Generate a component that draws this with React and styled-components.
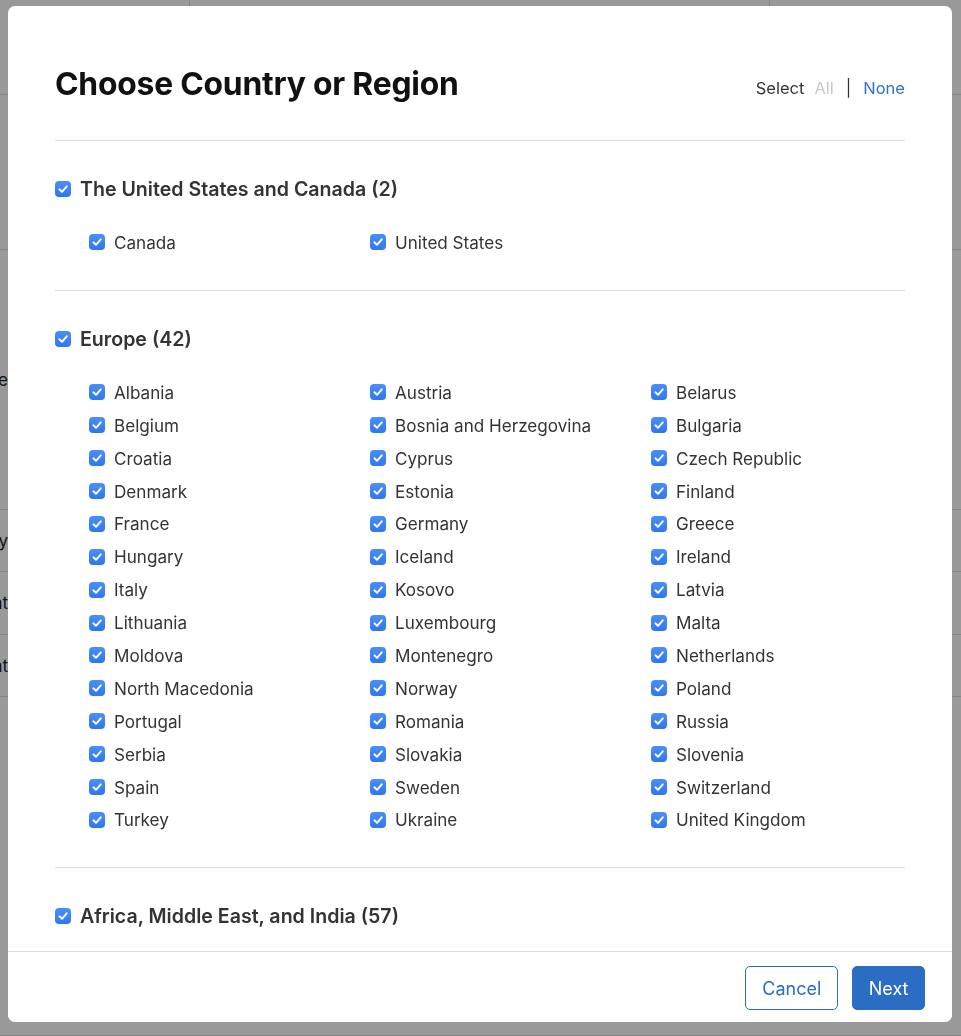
import React from "react";
import styled, { createGlobalStyle } from "styled-components";

const Global = createGlobalStyle`
  html, body { margin: 0; padding: 0; height: 100%; }
  body {
    font-family: Inter, "Noto Sans", "Liberation Sans", sans-serif;
    background: #fff;
    overflow: hidden;
  }
  * { box-sizing: border-box; }
`;

/* ---------- background page (behind the dim overlay) ---------- */
const Page = styled.div`
  width: 961px;
  height: 1036px;
  display: flex;
  flex-direction: column;
  background: #fff;
`;
const PageRow = styled.div`
  height: ${(p) => p.$h}px;
  flex: none;
  display: flex;
  align-items: center;
  border-bottom: 1px solid #dcdcdc;
  font-size: 17px;
  color: #222;
`;
const PageCell = styled.div`
  width: ${(p) => p.$w}px;
  flex: none;
  height: 100%;
  display: flex;
  align-items: center;
  justify-content: flex-end;
  border-right: ${(p) => (p.$line ? "1px solid #dcdcdc" : "none")};
  white-space: nowrap;
  overflow: visible;
`;
const Dim = styled.div`
  position: fixed;
  inset: 0;
  background: rgba(0, 0, 0, 0.4);
`;

/* ---------- modal ---------- */
const Modal = styled.div`
  position: fixed;
  left: 8px;
  top: 6px;
  width: 944px;
  height: 1016px;
  background: #fff;
  border-radius: 7px;
  display: flex;
  flex-direction: column;
  overflow: hidden;
`;
const Body = styled.div`
  flex: 1;
  overflow: hidden;
  padding: 0 47px;
`;
const Header = styled.div`
  height: 135px;
  display: flex;
  align-items: center;
  justify-content: space-between;
  padding-top: 21px;
  border-bottom: 1px solid #dddddd;
`;
const Title = styled.h1`
  margin: 0;
  font-size: 31.8px;
  font-weight: 700;
  color: #111;
  letter-spacing: -0.2px;
`;
const SelectBar = styled.div`
  display: flex;
  align-items: center;
  gap: 10px;
  font-size: 16.5px;
  color: #333;
  padding-top: 9px;
`;
const SelectLink = styled.span`
  color: ${(p) => (p.$disabled ? "#c8c8c8" : "#2f72cc")};
  cursor: ${(p) => (p.$disabled ? "default" : "pointer")};
`;
const Pipe = styled.span`
  color: #333;
  margin: 0 2px;
`;

const Section = styled.section`
  padding: 36px 0 ${(p) => (p.$last ? 0 : 31)}px;
  border-bottom: ${(p) => (p.$last ? "none" : "1px solid #dddddd")};
`;
const GroupHead = styled.label`
  height: 24px;
  display: flex;
  align-items: center;
  gap: 9px;
  font-size: 19.6px;
  font-weight: 600;
  color: #333;
`;
const Grid = styled.div`
  margin-top: 25px;
  padding-left: 34px;
  display: grid;
  grid-template-columns: repeat(3, 281px);
  grid-auto-rows: 32.9px;
`;
const Item = styled.label`
  display: flex;
  align-items: center;
  gap: 9px;
  font-size: 17.1px;
  color: #333;
  white-space: nowrap;
`;
const Box = styled.span`
  width: 16px;
  height: 16px;
  flex: none;
  border-radius: 4px;
  background: linear-gradient(#4a8ff8, #2f77f0);
  display: inline-flex;
  align-items: center;
  justify-content: center;
`;

const Footer = styled.div`
  flex: none;
  height: 71px;
  border-top: 1px solid #dddddd;
  display: flex;
  align-items: center;
  justify-content: flex-end;
  gap: 14px;
  padding: 2px 27px 0 0;
`;
const Button = styled.button`
  height: 44px;
  padding: 0 ${(p) => (p.$primary ? 15.5 : 16)}px;
  border-radius: 5px;
  font-family: inherit;
  font-size: 18px;
  border: 1px solid #2c6dc4;
  background: ${(p) => (p.$primary ? "#2c6dc4" : "#fff")};
  color: ${(p) => (p.$primary ? "#fff" : "#2c6dc4")};
  cursor: pointer;
`;

const Check = () => (
  <Box>
    <svg width="12" height="12" viewBox="0 0 12 12">
      <path
        d="M2.4 6.3 L5 8.8 L9.8 3.3"
        fill="none"
        stroke="#fff"
        strokeWidth="1.9"
        strokeLinecap="round"
        strokeLinejoin="round"
      />
    </svg>
  </Box>
);

const groups = [
  { name: "The United States and Canada", items: ["Canada", "United States"] },
  {
    name: "Europe",
    items: [
      "Albania", "Austria", "Belarus",
      "Belgium", "Bosnia and Herzegovina", "Bulgaria",
      "Croatia", "Cyprus", "Czech Republic",
      "Denmark", "Estonia", "Finland",
      "France", "Germany", "Greece",
      "Hungary", "Iceland", "Ireland",
      "Italy", "Kosovo", "Latvia",
      "Lithuania", "Luxembourg", "Malta",
      "Moldova", "Montenegro", "Netherlands",
      "North Macedonia", "Norway", "Poland",
      "Portugal", "Romania", "Russia",
      "Serbia", "Slovakia", "Slovenia",
      "Spain", "Sweden", "Switzerland",
      "Turkey", "Ukraine", "United Kingdom",
    ],
  },
  { name: "Africa, Middle East, and India", count: 57, items: [] },
];

const bgRows = [
  { h: 95, t: "" },
  { h: 155, t: "" },
  { h: 260, t: "Type" },
  { h: 62, t: "Priority" },
  { h: 63, t: "Amount" },
  { h: 62, t: "Amount" },
  { h: 339, t: "" },
];

export default function App() {
  return (
    <>
      <Global />
      <Page>
        {bgRows.map((r, i) => (
          <PageRow key={i} $h={r.h}>
            <PageCell $w={8}>{r.t}</PageCell>
            <PageCell $w={182} $line={i === 0} />
            <PageCell $w={580} $line={i === 0} />
          </PageRow>
        ))}
      </Page>
      <Dim />
      <Modal>
        <Body>
          <Header>
            <Title>Choose Country or Region</Title>
            <SelectBar>
              <span>Select</span>
              <SelectLink $disabled>All</SelectLink>
              <Pipe>|</Pipe>
              <SelectLink>None</SelectLink>
            </SelectBar>
          </Header>
          {groups.map((g, gi) => (
            <Section key={g.name} $last={gi === groups.length - 1}>
              <GroupHead>
                <Check />
                {g.name} ({g.count ?? g.items.length})
              </GroupHead>
              {g.items.length > 0 && (
                <Grid>
                  {g.items.map((it) => (
                    <Item key={it}>
                      <Check />
                      {it}
                    </Item>
                  ))}
                </Grid>
              )}
            </Section>
          ))}
        </Body>
        <Footer>
          <Button>Cancel</Button>
          <Button $primary>Next</Button>
        </Footer>
      </Modal>
    </>
  );
}
